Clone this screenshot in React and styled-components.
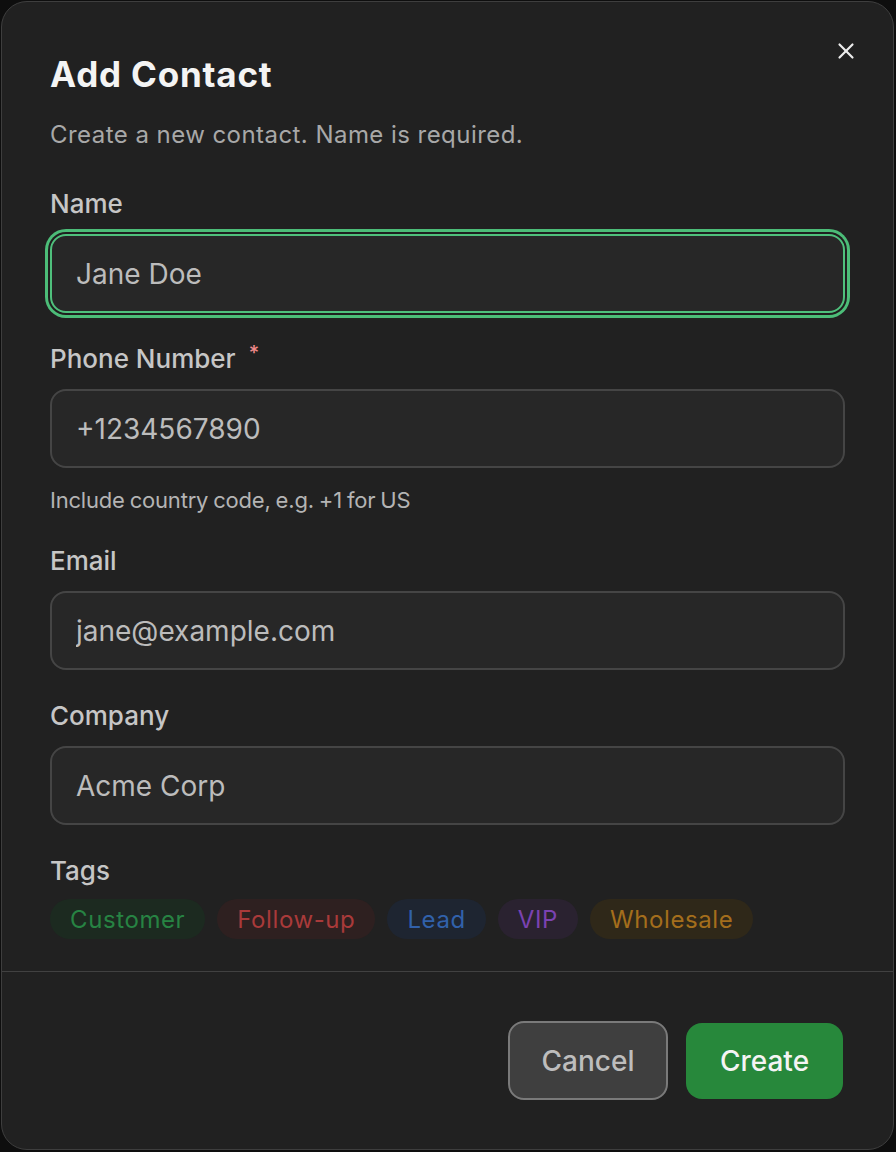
import React from "react";
import styled, { createGlobalStyle } from "styled-components";
import { X } from "lucide-react";

const GlobalStyle = createGlobalStyle`
  html, body {
    margin: 0;
    padding: 0;
    background: #0e0e0e;
    font-family: Inter, "Noto Sans", sans-serif;
  }
  * {
    box-sizing: border-box;
  }
`;

const TAGS = [
  { name: "Customer", color: "#278343", bg: "#1c2a20" },
  { name: "Follow-up", color: "#a93a3a", bg: "#2e2020" },
  { name: "Lead", color: "#3161aa", bg: "#1e2531" },
  { name: "VIP", color: "#7b42b2", bg: "#2a2230" },
  { name: "Wholesale", color: "#a46e1c", bg: "#2f2819" },
];

const FIELDS = [
  { label: "Name", placeholder: "Jane Doe", focused: true },
  {
    label: "Phone Number",
    placeholder: "+1234567890",
    required: true,
    help: "Include country code, e.g. +1 for US",
  },
  { label: "Email", placeholder: "jane@example.com" },
  { label: "Company", placeholder: "Acme Corp" },
];

function App() {
  return (
    <>
      <GlobalStyle />
      <Dialog>
        <CloseButton aria-label="Close">
          <X size={26} strokeWidth={2} />
        </CloseButton>

        {/* Body */}
        <Body>
          <Title>Add Contact</Title>
          <Description>Create a new contact. Name is required.</Description>

          <Fields>
            {FIELDS.map((f) => (
              <Field key={f.label}>
                <Label>
                  {f.label}
                  {f.required && <Required>*</Required>}
                </Label>
                <Input placeholder={f.placeholder} $focused={f.focused} />
                {f.help && <Help>{f.help}</Help>}
              </Field>
            ))}

            <Field>
              <Label>Tags</Label>
              <TagRow>
                {TAGS.map((t) => (
                  <Tag key={t.name} $color={t.color} $bg={t.bg}>
                    {t.name}
                  </Tag>
                ))}
              </TagRow>
            </Field>
          </Fields>
        </Body>

        {/* Footer */}
        <Footer>
          <CancelButton>Cancel</CancelButton>
          <CreateButton>Create</CreateButton>
        </Footer>
      </Dialog>
    </>
  );
}

export default App;

const Dialog = styled.div`
  position: relative;
  margin: 1px 0 0 1px;
  width: 893px;
  height: 1149px;
  background: #212121;
  border: 1px solid #3e3e3e;
  border-radius: 26px;
  display: flex;
  flex-direction: column;
  overflow: hidden;
`;

const CloseButton = styled.button`
  position: absolute;
  top: 36px;
  right: 34px;
  width: 26px;
  height: 26px;
  padding: 0;
  border: none;
  background: transparent;
  color: #ececec;
  display: flex;
  align-items: center;
  justify-content: center;
  cursor: pointer;
`;

const Body = styled.div`
  padding: 50px 48px 32px 48px;
  display: flex;
  flex-direction: column;
`;

const Title = styled.h2`
  margin: 0;
  font-size: 35px;
  line-height: 44px;
  font-weight: 700;
  color: #f4f4f4;
  letter-spacing: 0.8px;
`;

const Description = styled.p`
  margin: 23px 0 0;
  font-size: 24px;
  line-height: 32px;
  color: #a8a8a8;
  letter-spacing: 0.45px;
`;

const Fields = styled.div`
  margin-top: 37px;
  display: flex;
  flex-direction: column;
  gap: 30px;
`;

const Field = styled.div`
  display: flex;
  flex-direction: column;
`;

const Label = styled.label`
  display: flex;
  align-items: flex-start;
  font-size: 26px;
  line-height: 32px;
  font-weight: 500;
  color: #c6c6c6;
`;

const Required = styled.span`
  margin-left: 13px;
  font-size: 20px;
  line-height: 20px;
  color: #f08a8a;
`;

const Input = styled.input`
  margin-top: 14px;
  width: 100%;
  height: 79px;
  padding: 0 24px;
  background: #272727;
  border: 2px solid ${(p) => (p.$focused ? "#4fc07c" : "#454545")};
  border-radius: 16px;
  box-shadow: ${(p) =>
    p.$focused ? "0 0 0 2px #1f1f1f, 0 0 0 5px #4cbd78" : "none"};
  font-family: inherit;
  font-size: 28px;
  color: #d0d0d0;
  outline: none;

  &::placeholder {
    color: #bcbcbc;
  }
`;

const Help = styled.div`
  margin-top: 17px;
  font-size: 22px;
  line-height: 30px;
  color: #b4b4b4;
  letter-spacing: -0.2px;
  word-spacing: -1px;
`;

const TagRow = styled.div`
  margin-top: 12px;
  display: flex;
  gap: 12px;
`;

const Tag = styled.span`
  height: 40px;
  padding: 0 20px;
  display: inline-flex;
  align-items: center;
  border-radius: 999px;
  background: ${(p) => p.$bg};
  color: ${(p) => p.$color};
  font-size: 24px;
  letter-spacing: 0.6px;
`;

const Footer = styled.div`
  flex: 1;
  border-top: 1px solid #414141;
  display: flex;
  align-items: center;
  justify-content: flex-end;
  gap: 18px;
  padding: 0 50px 0 0;
`;

const CancelButton = styled.button`
  width: 160px;
  height: 79px;
  border: 2px solid #7a7a7a;
  border-radius: 16px;
  background: #3f3f3f;
  color: #bdbdbd;
  font-family: inherit;
  font-size: 28px;
  font-weight: 500;
  cursor: pointer;
`;

const CreateButton = styled.button`
  width: 157px;
  height: 76px;
  border: none;
  border-radius: 16px;
  background: #27883b;
  color: #f4f4f4;
  font-family: inherit;
  font-size: 28px;
  font-weight: 500;
  cursor: pointer;
`;
